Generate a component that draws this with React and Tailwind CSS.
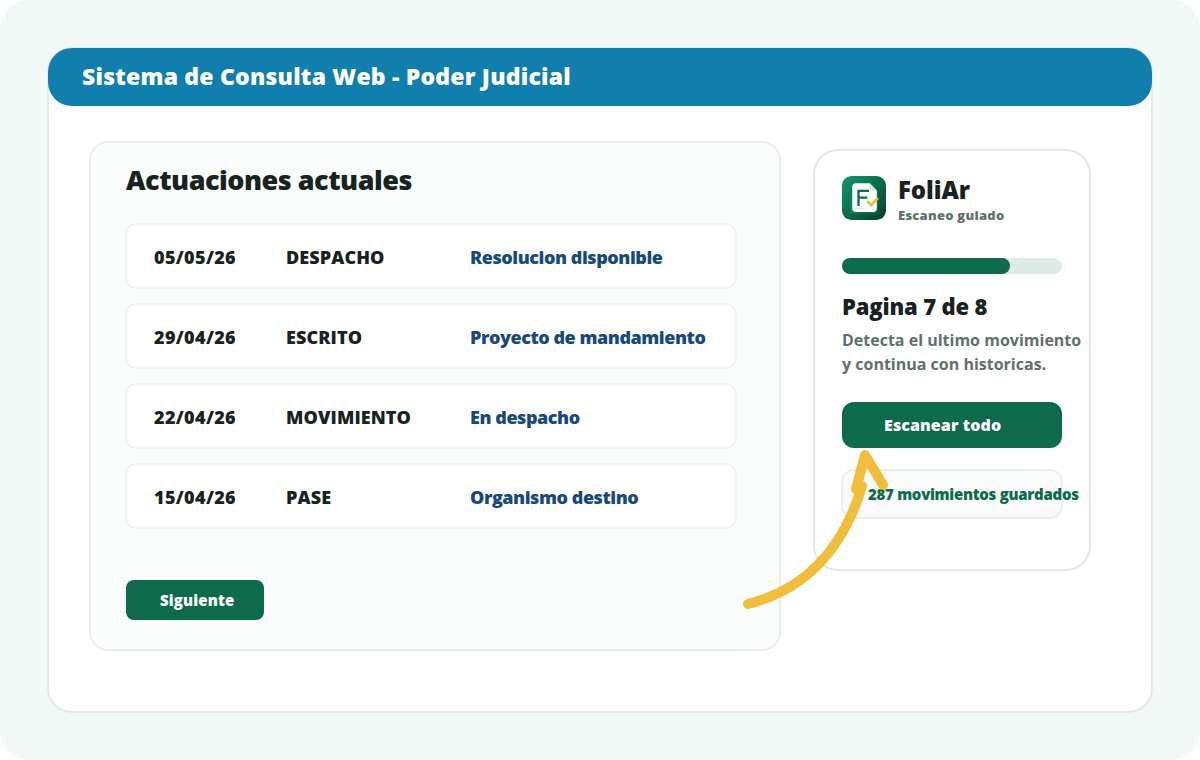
const ROWS = [
  { date: '05/05/26', type: 'DESPACHO',   detail: 'Resolucion disponible' },
  { date: '29/04/26', type: 'ESCRITO',    detail: 'Proyecto de mandamiento' },
  { date: '22/04/26', type: 'MOVIMIENTO', detail: 'En despacho' },
  { date: '15/04/26', type: 'PASE',       detail: 'Organismo destino' },
]

export default function App() {
  return (
    <div className="relative w-[1200px] h-[760px] bg-[#f2f8f6] rounded-[28px] p-[47px] font-['Open_Sans','Noto_Sans',sans-serif] font-extrabold text-[#172321] whitespace-nowrap overflow-hidden">
      <div className="h-[666px] bg-white border-2 border-[#e1ebe8] rounded-[25px]">
        <header className="-mx-px -mt-px h-[58px] rounded-3xl bg-[#107fae] flex items-center pl-[34px]">
          <h1 className="text-[23px] leading-8 -mt-0.5 text-white tracking-[0.2px]">Sistema de Consulta Web - Poder Judicial</h1>
        </header>

        <main className="flex items-start pl-10 pt-[35px]">
          <Actuaciones />
          <FoliarCard />
        </main>
      </div>
      <Arrow />
    </div>
  )
}

function Actuaciones() {
  return (
    <section className="w-[692px] h-[510px] shrink-0 bg-[#fbfdfc] border-2 border-[#e9efed] rounded-[19px] pl-[34px] pt-[18px]">
      <h2 className="text-[27px] leading-[38px] pl-px tracking-[-0.5px]">Actuaciones actuales</h2>
      <div className="mt-6 flex flex-col gap-3.5 w-[612px]">
        {ROWS.map(r => (
          <div key={r.date} className="h-[66px] bg-white border-2 border-[#eff3f2] rounded-[11px] pl-[27px] pt-0.5 flex items-center text-[18px]">
            <span className="w-[132px] tracking-[0.35px]">{r.date}</span>
            <span className="w-[184px] tracking-[0.1px]">{r.type}</span>
            <span className="text-[#174a7c] tracking-[-0.45px]">{r.detail}</span>
          </div>
        ))}
      </div>
      <button className="mt-[51px] ml-px w-[138px] h-10 rounded-lg bg-[#0d6b4b] text-white text-[15px] pl-[34px] text-left tracking-[0.15px]">Siguiente</button>
    </section>
  )
}

function FoliarCard() {
  return (
    <aside className="ml-8 mt-2 w-[278px] h-[422px] shrink-0 bg-white border-2 border-[#e1e9e7] rounded-[25px] px-[27px] pt-[25px]">
      <div className="flex gap-3">
        <Logo />
        <div>
          <div className="text-2xl leading-[28px] tracking-[-0.1px]">FoliAr</div>
          <div className="text-[13px] leading-[18px] mt-0.5 text-[#61706c] tracking-[0.25px]">Escaneo guiado</div>
        </div>
      </div>

      <div className="mt-[34px] w-[220px] h-4 rounded-full bg-[#dcebe6]">
        <div className="w-[168px] h-4 rounded-full bg-[#0d6b4b]" />
      </div>

      <div className="mt-4 text-[22px] leading-[32px] tracking-[-0.15px]">Pagina 7 de 8</div>
      <p className="mt-1.5 text-base leading-6 font-bold text-[#61706c]">
        Detecta el ultimo movimiento<br />y continua con historicas.
      </p>

      <button className="mt-[26px] w-[220px] h-[46px] rounded-xl bg-[#0d6b4b] text-white text-base pl-[42px] text-left tracking-[0.1px]">Escanear todo</button>
      <div className="mt-[21px] -ml-px w-[222px] h-[50px] rounded-[13px] bg-[#f8fbfa] border-2 border-[#e9efed] pl-[25px] flex items-center text-[15px] text-[#0d6b4b] tracking-[-0.28px]">
        287 movimientos guardados
      </div>
    </aside>
  )
}

function Logo() {
  return (
    <svg width="44" height="44" viewBox="0 0 44 44" className="shrink-0">
      <defs>
        <linearGradient id="logoBg" x1="0" y1="0" x2="1" y2="1">
          <stop offset="0" stopColor="#10986d" />
          <stop offset="0.55" stopColor="#0b6848" />
          <stop offset="1" stopColor="#063d2b" />
        </linearGradient>
      </defs>
      <rect width="44" height="44" rx="9.5" fill="url(#logoBg)" />
      <rect x="7.5" y="13" width="28.5" height="24.5" rx="4.5" fill="#12885f" opacity="0.5" />
      <path d="M14 7.3H27.8L34.8 14.5V32.2A3.8 3.8 0 0 1 31 36H14A3.8 3.8 0 0 1 10.2 32.2V11.1A3.8 3.8 0 0 1 14 7.3Z" fill="#fbfefd" />
      <path d="M27.8 7.3L34.8 14.5H30A2.2 2.2 0 0 1 27.8 12.3Z" fill="#cfe5dc" />
      <path d="M16.5 30V14.8H27M16.5 21.6H25.3" fill="none" stroke="#0d6b4b" strokeWidth="2.3" />
      <path d="M13 32.5H23" stroke="#dcebe6" strokeWidth="1.2" />
      <path d="M26 26L29.2 29.2L35.2 22.8" fill="none" stroke="#f2bc3d" strokeWidth="2.8" strokeLinecap="round" strokeLinejoin="round" />
    </svg>
  )
}

// pointer from the list up to the scan button, drawn over both panels
function Arrow() {
  return (
    <svg className="absolute left-0 top-0 pointer-events-none" width="1200" height="760" fill="none" stroke="#f2bc3d" strokeWidth="10" strokeLinecap="round" strokeLinejoin="round">
      <path d="M748 604C804 590 843 550 862 486" />
      <path d="M856 489L865 455L883 485" />
    </svg>
  )
}
